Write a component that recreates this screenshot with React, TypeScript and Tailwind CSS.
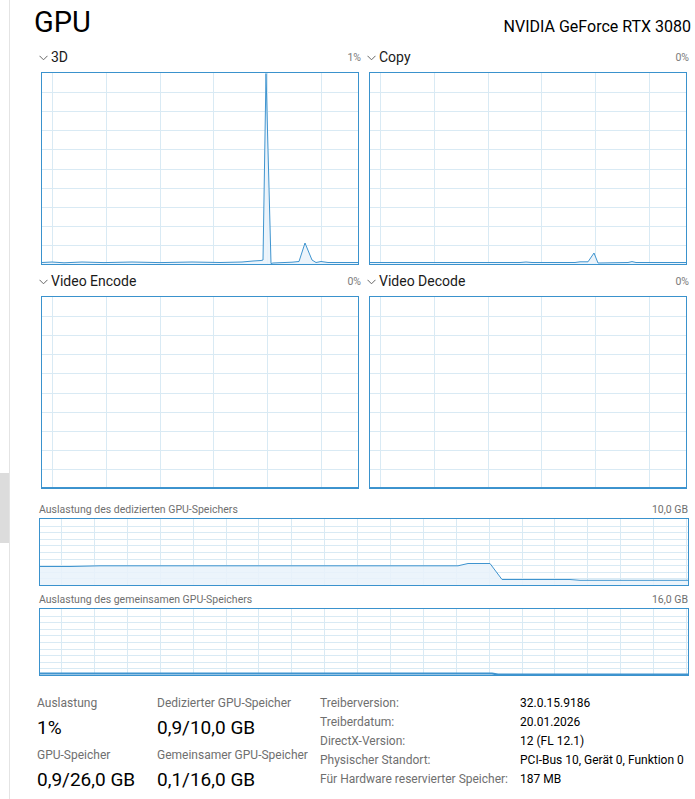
import React from "react";

const GRID = "#d9eaf4";
const LINE = "#3f94cf";
const FILL = "#e9f2fa";

type Pt = [number, number];

function Chart({
  w,
  h,
  colStart,
  colStep,
  rows,
  data,
  thick = 1,
}: {
  w: number;
  h: number;
  colStart: number;
  colStep: number;
  rows: number;
  data?: Pt[];
  thick?: number;
}) {
  const vx: number[] = [];
  for (let x = colStart; x < w; x += colStep) vx.push(x);
  const hy: number[] = [];
  for (let i = 1; i < rows; i++) hy.push((h / rows) * i);
  const pts = data ? data.map(([x, y]) => `${x},${y}`).join(" ") : "";
  const area = data ? `0,${h} ${pts} ${w},${h}` : "";
  return (
    <div className="border border-[#3a92cd] bg-white" style={{ width: w + 2, height: h + 2 }}>
      <svg width={w} height={h} viewBox={`0 0 ${w} ${h}`} className="block">
        {hy.map((y) => (
          <line key={`h${y}`} x1={0} x2={w} y1={Math.round(y) + 0.5} y2={Math.round(y) + 0.5} stroke={GRID} strokeWidth={1} />
        ))}
        {vx.map((x) => (
          <line key={`v${x}`} y1={0} y2={h} x1={Math.round(x) + 0.5} x2={Math.round(x) + 0.5} stroke={GRID} strokeWidth={1} />
        ))}
        {data && (
          <>
            <polygon points={area} fill={FILL} fillOpacity={0.85} />
            <polyline points={pts} fill="none" stroke={LINE} strokeWidth={thick} strokeLinejoin="round" />
          </>
        )}
      </svg>
    </div>
  );
}

const engine3d: Pt[] = [
  [0, 189.5], [10, 189], [22, 189.8], [40, 189], [62, 189.6], [90, 189], [118, 189.6], [150, 189],
  [178, 189.5], [200, 189], [211, 188], [219, 187.5], [221, 187], [224, 0.5], [229, 190.5],
  [231, 190], [250, 189.2], [257, 188.5], [263, 170], [270, 187], [274, 189.5], [279, 188.5],
  [286, 189.5], [316, 189.5],
];

const engineCopy: Pt[] = [
  [0, 189.5], [150, 189.5], [156, 189], [162, 189.5], [205, 189.5], [210, 188.8], [218, 188.8],
  [224, 180], [228, 190], [258, 189.5], [262, 188.6], [266, 189.5], [316, 189.5],
];

const engineFlat: Pt[] = [
  [0, 190.5], [316, 190.5],
];

const dedicated: Pt[] = [
  [0, 47.5], [30, 47.5], [60, 46.8], [320, 46.8], [418, 46.8], [428, 44.5], [450, 44.5],
  [462, 60.5], [530, 60.5], [540, 61.3], [648, 61.3],
];

const shared: Pt[] = [
  [0, 64.6], [452, 64.6], [458, 65.5], [648, 65.5],
];

function Engine({ name, pct, data }: { name: string; pct: string; data: Pt[] }) {
  return (
    <div className="flex flex-col w-[322px]">
      <div className="h-[23px] pt-[1px] flex items-start justify-between">
        <div className="flex items-start">
          <svg width="9" height="6" viewBox="0 0 9 6" className="mt-[5px] mr-[3px]">
            <path d="M0.5 0.8 L4.5 4.8 L8.5 0.8" fill="none" stroke="#666" strokeWidth="1" />
          </svg>
          <span className="text-[14px] leading-none text-[#1a1a1a]">{name}</span>
        </div>
        <span className="text-[10.5px] leading-none text-[#7a7a7a] mt-[3px]">{pct}</span>
      </div>
      <div className="ml-[2px]">
        <Chart w={316} h={191} colStart={10} colStep={53.8} rows={10} data={data} />
      </div>
    </div>
  );
}

function Memory({ label, cap, data, thick }: { label: string; cap: string; data: Pt[]; thick?: number }) {
  return (
    <div>
      <div className="flex justify-between h-[13px] text-[10.5px] leading-none text-[#6f6f6f]">
        <span>{label}</span>
        <span className="mr-[1px]">{cap}</span>
      </div>
      <Chart w={648} h={66} colStart={21} colStep={32.9} rows={10} data={data} thick={thick} />
    </div>
  );
}

function Stat({ label, value }: { label: string; value: string }) {
  return (
    <div className="flex flex-col">
      <span className="text-[12px] leading-none text-[#6f6f6f] whitespace-nowrap">{label}</span>
      <span className="text-[19px] leading-none text-black mt-[9px] whitespace-nowrap">{value}</span>
    </div>
  );
}

const props: [string, string][] = [
  ["Treiberversion:", "32.0.15.9186"],
  ["Treiberdatum:", "20.01.2026"],
  ["DirectX-Version:", "12 (FL 12.1)"],
  ["Physischer Standort:", "PCI-Bus 10, Gerät 0, Funktion 0"],
  ["Für Hardware reservierter Speicher:", "187 MB"],
];

export default function App() {
  return (
    <div className="flex w-[695px] h-[799px] bg-white overflow-hidden font-['Roboto',sans-serif]">
      {/* side scroll strip */}
      <div className="w-[10px] shrink-0 border-r border-[#e4e4e4] flex flex-col">
        <div className="h-[473px]" />
        <div className="h-[70px] bg-[#dcdcdc]" />
      </div>

      <div className="flex-1 pl-[29px] pr-[7px]">
        <div className="h-[49px] flex items-start justify-between">
          <span className="text-[29px] leading-none text-black ml-[-5px] mt-[8px]">GPU</span>
          <span className="text-[16px] leading-none text-black mt-[19px] mr-[-2px]">NVIDIA GeForce RTX 3080</span>
        </div>

        <div className="flex gap-[6px]">
          <Engine name="3D" pct="1%" data={engine3d} />
          <Engine name="Copy" pct="0%" data={engineCopy} />
        </div>
        <div className="flex gap-[6px] mt-[8px]">
          <Engine name="Video Encode" pct="0%" data={engineFlat} />
          <Engine name="Video Decode" pct="0%" data={engineFlat} />
        </div>

        <div className="mt-[16px]">
          <Memory label="Auslastung des dedizierten GPU-Speichers" cap="10,0 GB" data={dedicated} />
        </div>
        <div className="mt-[9px]">
          <Memory label="Auslastung des gemeinsamen GPU-Speichers" cap="16,0 GB" data={shared} thick={2} />
        </div>

        <div className="flex mt-[21px] ml-[-2px]">
          <div className="w-[120px] flex flex-col gap-[12px]">
            <Stat label="Auslastung" value="1%" />
            <Stat label="GPU-Speicher" value="0,9/26,0 GB" />
          </div>
          <div className="w-[163px] flex flex-col gap-[12px]">
            <Stat label="Dedizierter GPU-Speicher" value="0,9/10,0 GB" />
            <Stat label="Gemeinsamer GPU-Speicher" value="0,1/16,0 GB" />
          </div>
          <div className="grid grid-cols-[200px_auto] auto-rows-[19px] mt-[-3px] text-[12px] leading-[19px] whitespace-nowrap">
            {props.map(([k, v]) => (
              <React.Fragment key={k}>
                <span className="text-[#6f6f6f]">{k}</span>
                <span className="text-black">{v}</span>
              </React.Fragment>
            ))}
          </div>
        </div>
      </div>
    </div>
  );
}
